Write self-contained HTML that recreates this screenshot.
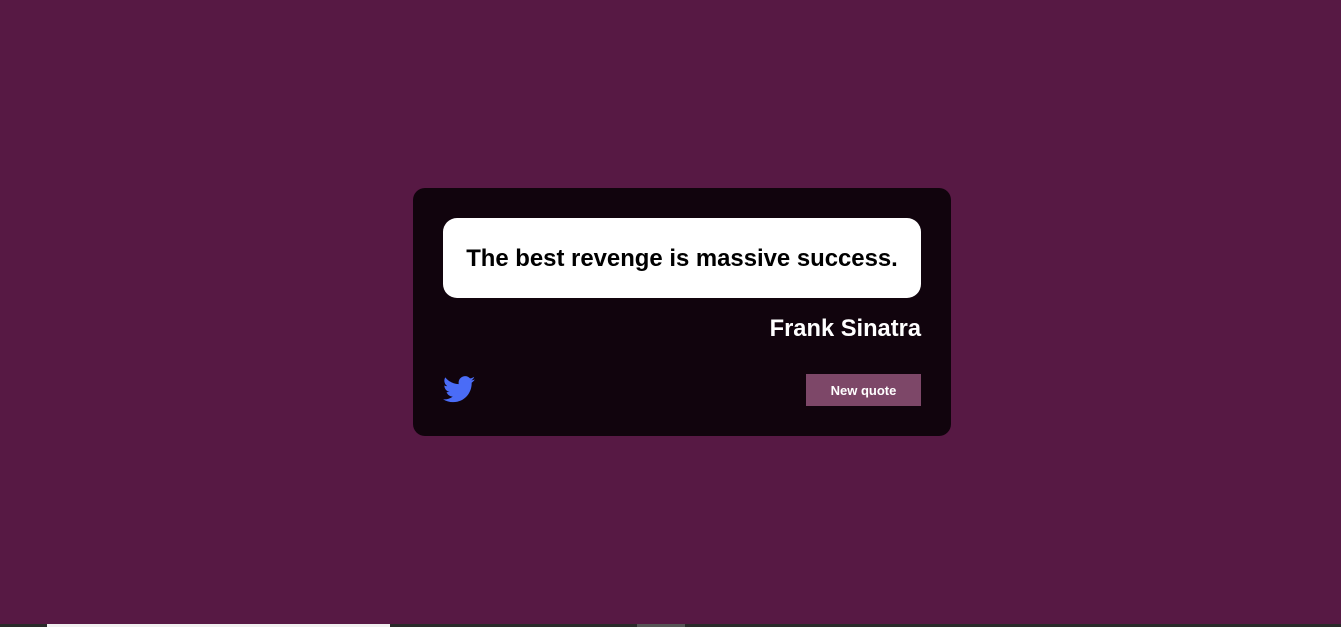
<!DOCTYPE html>
<html><head><style>
html,body{margin:0;padding:0;width:1341px;height:627px;overflow:hidden;background:#571944;font-family:"Liberation Sans",Arial,sans-serif;}
.card{position:absolute;left:413px;top:188px;width:538px;height:248px;background:#11040d;border-radius:12px;}
.q{position:absolute;left:30px;top:30px;width:478px;height:80px;background:#fff;border-radius:14px;display:flex;align-items:center;justify-content:center;font-weight:bold;font-size:23.9px;color:#000;padding-top:2px;box-sizing:border-box;}
.a{position:absolute;right:30px;top:128px;color:#fff;font-weight:bold;font-size:23.7px;}
.btn{position:absolute;left:393px;top:186px;width:115px;height:32px;background:#7d4768;color:#fff;font-weight:bold;font-size:13px;display:flex;align-items:center;justify-content:center;}
.tw{position:absolute;left:30px;top:188px;}
.bar{position:absolute;left:0;top:624px;width:1341px;height:3px;background:#2a2a2a;}
</style></head><body>
<div class="card">
<div class="q">The best revenge is massive success.</div>
<div class="a">Frank Sinatra</div>
<svg class="tw" width="32" height="27" viewBox="0 0 24 20"><path fill="#4a6cf7" d="M24 2.4c-.9.4-1.8.6-2.8.8 1-.6 1.8-1.6 2.2-2.7-1 .6-2 1-3.1 1.2C19.4.7 18.1 0 16.6 0c-2.7 0-4.9 2.2-4.9 4.9 0 .4 0 .8.1 1.1C7.7 5.8 4.1 3.9 1.7.9c-.4.7-.7 1.6-.7 2.5 0 1.7.9 3.2 2.2 4.1-.8 0-1.6-.2-2.2-.6v.1c0 2.4 1.7 4.4 3.9 4.8-.4.1-.8.2-1.3.2-.3 0-.6 0-.9-.1.6 2 2.4 3.4 4.6 3.4-1.7 1.3-3.8 2.1-6.1 2.1-.4 0-.8 0-1.2-.1 2.2 1.4 4.8 2.2 7.5 2.2 9.1 0 14-7.5 14-14v-.6c1-.7 1.8-1.6 2.5-2.5z"/></svg>
<div class="btn">New quote</div>
</div>
<div class="bar"></div>
<div style="position:absolute;left:47px;top:624px;width:343px;height:3px;background:#f0f0f0"></div>
<div style="position:absolute;left:637px;top:624px;width:48px;height:3px;background:#555"></div>
</body></html>
